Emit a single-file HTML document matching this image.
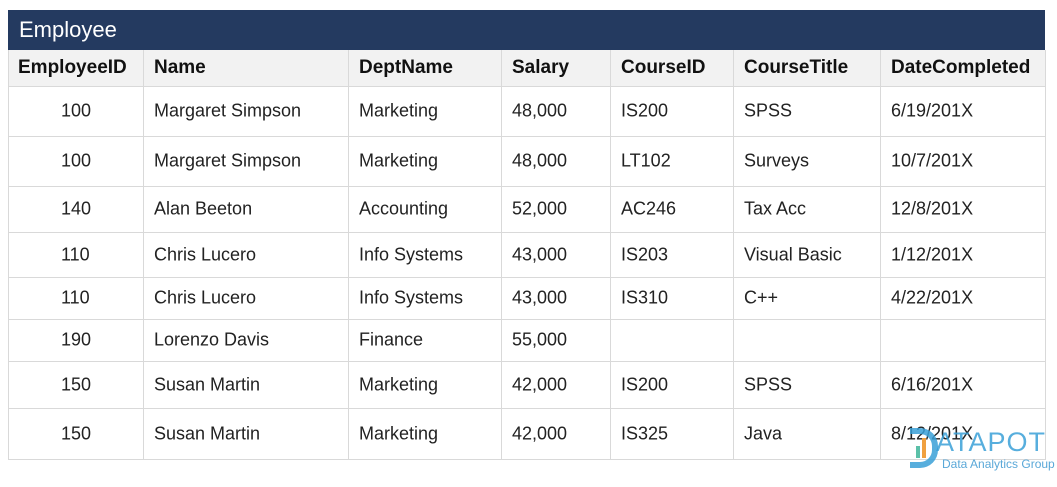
<!DOCTYPE html>
<html><head><style>
body{margin:0;width:1057px;height:487px;background:#fff;position:relative;overflow:hidden;font-family:"Liberation Sans","DejaVu Sans",sans-serif;}
.t{position:absolute;left:8px;top:10px;width:1037px;height:40px;background:#243a60;color:#fff;font-size:22px;line-height:40px;box-sizing:border-box;padding-left:11px}
.h{position:absolute;left:8px;top:50px;width:1037px;height:36px;background:#f2f2f2}
.l{position:absolute;background:#d9d9d9}
.c{position:absolute;font-size:18px;color:#222;white-space:nowrap;transform:translateY(-50%)}
.b{font-weight:bold;color:#111;font-size:19px}
</style></head><body>
<div class="t">Employee</div>
<div class="h"></div>
<div id="g"></div>
<div style="position:absolute;left:910px;top:428px;width:22px;height:28px;border:6px solid #3aa0d8;border-left:none;border-radius:0 18px 18px 0;opacity:.85"></div>
<div style="position:absolute;left:916px;top:446px;width:4px;height:12px;background:#5bc0a8"></div>
<div style="position:absolute;left:922px;top:438px;width:4px;height:20px;background:#f0a040"></div>
<div style="position:absolute;left:936px;top:427px;font-size:27px;color:#3aa0d8;letter-spacing:1px;opacity:.85">ATAPOT</div>
<div style="position:absolute;left:942px;top:457px;font-size:12px;color:#5aa8d8">Data Analytics Group</div>
<script>
var g=document.getElementById('g'),h='';
var cols=[8,143,348,501,610,733,880,1045];
var rows=[50,86,136,186,232,277,319,361,408,459];
for(var i=0;i<cols.length;i++)h+='<div class="l" style="left:'+cols[i]+'px;top:50px;width:1px;height:409px"></div>';
for(var j=1;j<rows.length;j++)h+='<div class="l" style="left:8px;top:'+rows[j]+'px;width:1038px;height:1px"></div>';
var hd=['EmployeeID','Name','DeptName','Salary','CourseID','CourseTitle','DateCompleted'];
var d=[['100','Margaret Simpson','Marketing','48,000','IS200','SPSS','6/19/201X'],
['100','Margaret Simpson','Marketing','48,000','LT102','Surveys','10/7/201X'],
['140','Alan Beeton','Accounting','52,000','AC246','Tax Acc','12/8/201X'],
['110','Chris Lucero','Info Systems','43,000','IS203','Visual Basic','1/12/201X'],
['110','Chris Lucero','Info Systems','43,000','IS310','C++','4/22/201X'],
['190','Lorenzo Davis','Finance','55,000','','',''],
['150','Susan Martin','Marketing','42,000','IS200','SPSS','6/16/201X'],
['150','Susan Martin','Marketing','42,000','IS325','Java','8/12/201X']];
for(var i=0;i<7;i++)h+='<div class="c b" style="left:'+(cols[i]+(i==0?10:11))+'px;top:68px">'+hd[i]+'</div>';
for(var r=0;r<d.length;r++){var y=(rows[r+1]+rows[r+2])/2;
for(var i=0;i<7;i++){var x=i==0?61:cols[i]+11;h+='<div class="c" style="left:'+x+'px;top:'+y+'px">'+d[r][i]+'</div>';}}
g.innerHTML=h;
</script>
</body></html>
